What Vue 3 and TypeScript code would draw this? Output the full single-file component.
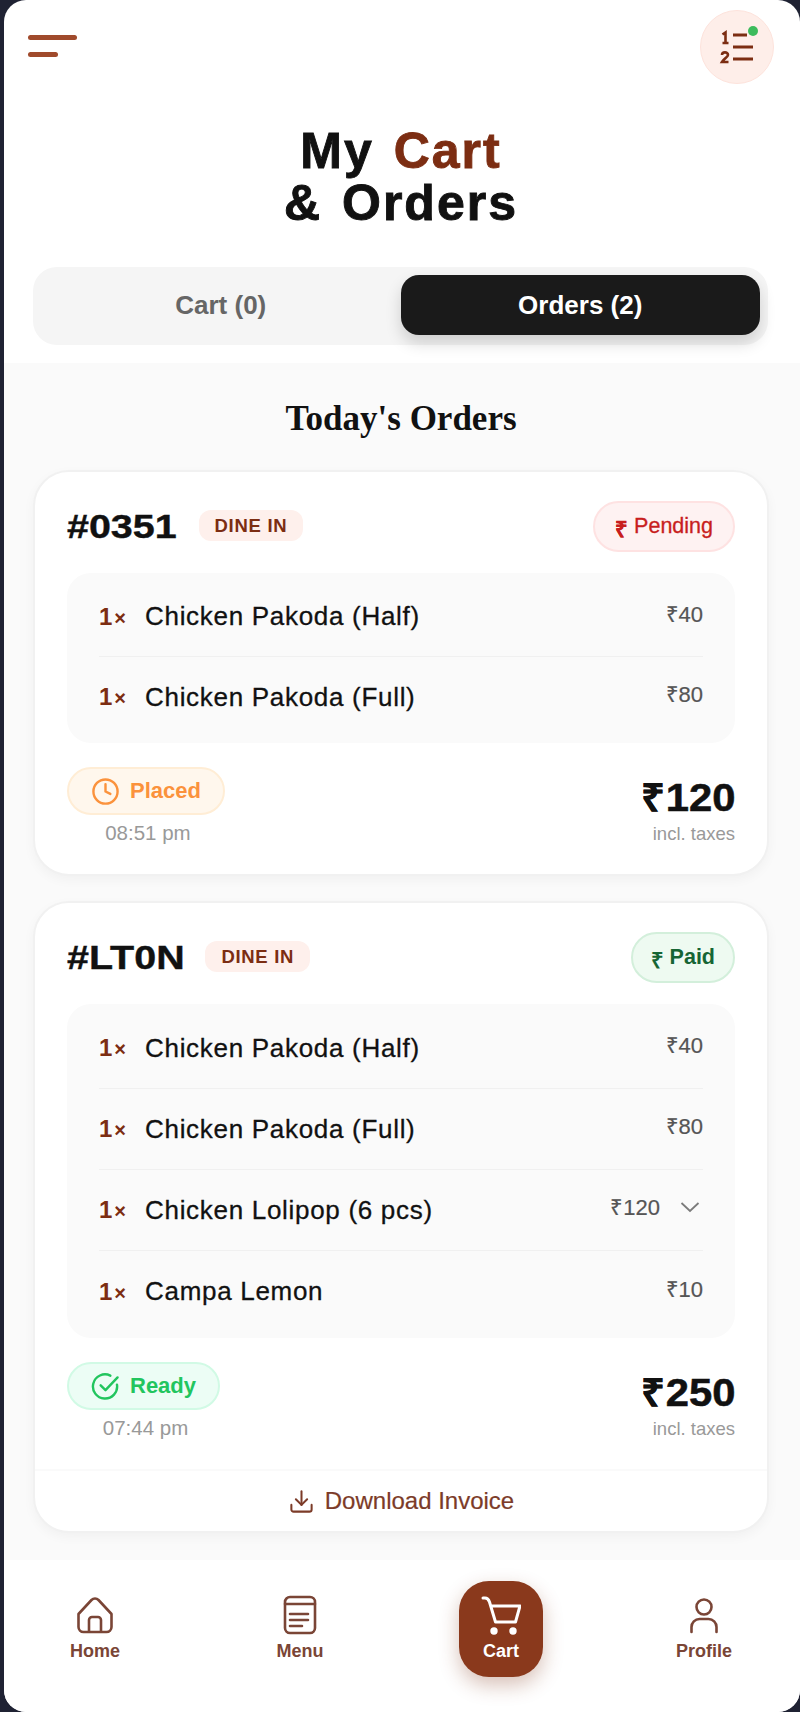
<script setup lang="ts">
interface Item {
  name: string;
  price: number;
  expand?: boolean;
}
interface Order {
  id: string;
  paid: boolean;
  status: string;
  time: string;
  total: number;
  invoice: boolean;
  items: Item[];
}

const orders: Order[] = [
  {
    id: "#0351",
    paid: false,
    status: "Placed",
    time: "08:51 pm",
    total: 120,
    invoice: false,
    items: [
      { name: "Chicken Pakoda (Half)", price: 40 },
      { name: "Chicken Pakoda (Full)", price: 80 },
    ],
  },
  {
    id: "#LT0N",
    paid: true,
    status: "Ready",
    time: "07:44 pm",
    total: 250,
    invoice: true,
    items: [
      { name: "Chicken Pakoda (Half)", price: 40 },
      { name: "Chicken Pakoda (Full)", price: 80 },
      { name: "Chicken Lolipop (6 pcs)", price: 120, expand: true },
      { name: "Campa Lemon", price: 10 },
    ],
  },
];
</script>

<template>
  <div class="frame">
    <div class="phone">
      <header class="top">
        <div class="topbar">
          <button class="menu-btn"><span class="bar long"></span><span class="bar short"></span></button>
          <button class="list-btn">
            <svg width="36" height="36" viewBox="0 0 36 36" fill="none" stroke="#7c2d12" stroke-width="3">
              <path d="M3.5 5.500 6.500 3.500V14M3.500 14h6" stroke-width="2.600" />
              <path d="M3 26c0-3.500 6-3.500 6 0 0 2-4 3.500-6 7h6.500" stroke-width="2.600" />
              <path d="M14 6h14M14 18h20M14 30h20" />
            </svg>
            <span class="dot"></span>
          </button>
        </div>
        <h1 class="title">My <span class="accent">Cart</span><br />&amp; Orders</h1>
        <div class="tabs">
          <div class="tab">Cart (0)</div>
          <div class="tab active">Orders (2)</div>
        </div>
      </header>

      <main class="content">
        <h2 class="section-title">Today's Orders</h2>

        <article v-for="order in orders" :key="order.id" class="card">
          <div class="card-body">
            <div class="card-head">
              <div class="head-left">
                <span class="order-id">{{ order.id }}</span>
                <span class="type">DINE IN</span>
              </div>
              <span class="pay" :class="order.paid ? 'paid' : 'pending'">
                <span class="pay-sign">₹</span> {{ order.paid ? "Paid" : "Pending" }}
              </span>
            </div>

            <div class="items" :class="{ long: order.items.length > 2 }">
              <div v-for="item in order.items" :key="item.name" class="item">
                <div class="item-left">
                  <span class="qty">1<small>×</small></span>
                  <span class="item-name">{{ item.name }}</span>
                </div>
                <div class="item-right">
                  <span class="price">₹{{ item.price }}</span>
                  <svg v-if="item.expand" class="chev" width="20" height="20" viewBox="0 0 20 20" fill="none" stroke="#7b7b7b" stroke-width="1.800">
                    <path d="M1.500 6 10 14l8.500-8" />
                  </svg>
                </div>
              </div>
            </div>

            <div class="card-foot">
              <div class="status-col">
                <span class="status" :class="order.paid ? 'ready' : 'placed'">
                  <svg v-if="!order.paid" width="29" height="29" viewBox="0 0 24 24" fill="none" stroke="currentColor" stroke-width="2" stroke-linecap="round" stroke-linejoin="round">
                    <circle cx="12" cy="12" r="10" />
                    <path d="M12 6v6l4 2" />
                  </svg>
                  <svg v-else width="29" height="29" viewBox="0 0 24 24" fill="none" stroke="currentColor" stroke-width="2" stroke-linecap="round" stroke-linejoin="round">
                    <path d="M21.500 10.500A10 10 0 1 1 16 3" />
                    <path d="m8 11 4 4L22 4.500" />
                  </svg>
                  {{ order.status }}
                </span>
                <span class="time">{{ order.time }}</span>
              </div>
              <div class="total-col">
                <span class="total">₹{{ order.total }}</span>
                <span class="taxes">incl. taxes</span>
              </div>
            </div>
          </div>

          <div v-if="order.invoice" class="invoice">
            <svg width="27" height="27" viewBox="0 0 24 24" fill="none" stroke="currentColor" stroke-width="1.800" stroke-linecap="round" stroke-linejoin="round">
              <path d="M21 15v4a2 2 0 0 1-2 2H5a2 2 0 0 1-2-2v-4" />
              <path d="m7 10 5 5 5-5" />
              <path d="M12 15V3" />
            </svg>
            Download Invoice
          </div>
        </article>
      </main>

      <nav class="nav">
        <div class="nav-item">
          <svg width="40" height="40" viewBox="0 0 40 40" fill="none" stroke="currentColor" stroke-width="2.600" stroke-linejoin="round">
            <path d="M3.500 19 16.500 5a5 5 0 0 1 7 0L36.500 19v13a5 5 0 0 1-5 5h-23a5 5 0 0 1-5-5z" />
            <path d="M14 37V25a3 3 0 0 1 3-3h6a3 3 0 0 1 3 3v12" />
          </svg>
          <span>Home</span>
        </div>
        <div class="nav-item nudge">
          <svg width="36" height="40" viewBox="0 0 36 40" fill="none" stroke="currentColor" stroke-width="2.600" stroke-linecap="round">
            <rect x="3" y="2" width="30" height="36" rx="5" />
            <path d="M3 9h30M8 19h18M8 25h18M8 31h12" />
          </svg>
          <span>Menu</span>
        </div>
        <div class="nav-item nav-cart">
          <svg width="40" height="40" viewBox="0 0 40 40" fill="none" stroke="#fff" stroke-width="3" stroke-linecap="round" stroke-linejoin="round">
            <path d="M2 3h2c2 0 3.500 1 4.500 4l6 20h20l4.500-16H10" />
            <circle cx="13" cy="36" r="2.200" fill="#fff" />
            <circle cx="32" cy="36" r="2.200" fill="#fff" />
          </svg>
          <span>Cart</span>
        </div>
        <div class="nav-item">
          <svg width="40" height="40" viewBox="0 0 40 40" fill="none" stroke="currentColor" stroke-width="2.600" stroke-linecap="round">
            <circle cx="20" cy="12" r="7.500" />
            <path d="M7.500 37v-5a8 8 0 0 1 8-8h9a8 8 0 0 1 8 8v5" />
          </svg>
          <span>Profile</span>
        </div>
      </nav>
    </div>
  </div>
</template>

<style>
html,
body {
  margin: 0;
  background: #1f2233;
}
</style>

<style scoped>
.frame {
  width: 800px;
  height: 1712px;
  background: #1f2233;
  overflow: hidden;
  font-family: "Liberation Sans", Arial, sans-serif;
}
.phone {
  margin-left: 4px;
  width: 796px;
  height: 1712px;
  background: #fff;
  border-radius: 22px;
  display: flex;
  flex-direction: column;
  overflow: hidden;
}
.top {
  padding: 10px 26px 18px 24px;
}
.topbar {
  display: flex;
  justify-content: space-between;
  align-items: flex-start;
}
button {
  border: 0;
  background: none;
  padding: 0;
}
.menu-btn {
  display: flex;
  flex-direction: column;
  gap: 12px;
  margin-top: 25px;
}
.bar {
  display: block;
  height: 5px;
  border-radius: 3px;
  background: #a04a2c;
}
.bar.long {
  width: 49px;
}
.bar.short {
  width: 30px;
}
.list-btn {
  position: relative;
  width: 74px;
  height: 74px;
  border-radius: 50%;
  background: #feeee9;
  border: 1px solid #fde3dc;
  display: flex;
  align-items: center;
  justify-content: center;
  box-sizing: border-box;
}
.dot {
  position: absolute;
  top: 15px;
  right: 15px;
  width: 10px;
  height: 10px;
  border-radius: 50%;
  background: #3dbb5c;
}
.title {
  margin: 41px 0 0;
  text-align: center;
  font-size: 50px;
  line-height: 52px;
  font-weight: 700;
  letter-spacing: 2px;
  word-spacing: 4px;
  -webkit-text-stroke: 0.900px currentColor;
  color: #111;
}
.accent {
  color: #7c2d12;
}
.tabs {
  margin: 38px 6px 0 5px;
  background: #f5f5f5;
  border-radius: 24px;
  padding: 8px 8px 10px;
  display: grid;
  grid-template-columns: 1fr 1fr;
}
.tab {
  height: 60px;
  border-radius: 18px;
  display: flex;
  align-items: center;
  justify-content: center;
  font-size: 26px;
  font-weight: 700;
  color: #666;
}
.tab.active {
  background: #1a1a1a;
  color: #fff;
  box-shadow: 0 8px 16px rgba(0, 0, 0, 0.16);
}
.content {
  flex: 1;
  background: #fafafa;
  padding: 0 31px 0 29px;
  min-height: 0;
}
.section-title {
  margin: 35px 0 30px;
  text-align: center;
  font-family: "Liberation Serif", serif;
  font-size: 35px;
  line-height: 42px;
  font-weight: 700;
  color: #111;
}
.card {
  background: #fff;
  border: 2px solid #f1f1f1;
  border-radius: 36px;
  box-shadow: 0 4px 12px rgba(0, 0, 0, 0.04);
  margin-bottom: 25px;
  overflow: hidden;
}
.card-body {
  padding: 29px 32px 30px;
}
.card-head {
  display: flex;
  justify-content: space-between;
  align-items: center;
}
.head-left {
  display: flex;
  align-items: center;
  gap: 20px;
}
.order-id {
  display: inline-block;
  font-size: 34px;
  font-weight: 700;
  transform: scaleX(1.16);
  transform-origin: left center;
  margin-right: 17px;
  -webkit-text-stroke: 0.400px #111;
  color: #111;
}
.type {
  padding: 0 16px;
  height: 31px;
  line-height: 31px;
  margin-top: -3px;
  border-radius: 12px;
  background: #fef0ec;
  color: #7c2d12;
  font-size: 18.500px;
  font-weight: 700;
  letter-spacing: 0.700px;
}
.pay {
  height: 51px;
  box-sizing: border-box;
  padding: 0 20px;
  border-radius: 26px;
  display: flex;
  align-items: center;
  gap: 6px;
  font-size: 21.500px;
  -webkit-text-stroke: 0.300px currentColor;
}
.pay.pending {
  background: #fef2f2;
  border: 2px solid #fee2e2;
  color: #c81e1e;
}
.pay.paid {
  background: #eefaf1;
  border: 2px solid #d3efdb;
  color: #166534;
  font-weight: 700;
  -webkit-text-stroke: 0;
  padding: 0 18px;
}
.pay-sign {
  font-size: 22px;
  font-weight: 700;
  margin-top: 3px;
}
.items {
  margin-top: 21px;
  background: #fafafa;
  border-radius: 24px;
  padding: 4px 32px 6px;
}
.item {
  height: 80px;
  box-sizing: border-box;
  display: flex;
  justify-content: space-between;
  align-items: center;
  border-bottom: 1px solid #f0f0f0;
}
.items.long .item {
  height: 81px;
}
.item:last-child {
  border-bottom: 0;
}
.item-left {
  display: flex;
  align-items: center;
  gap: 16px;
}
.qty {
  width: 30px;
  font-size: 24px;
  font-weight: 700;
  color: #7c2d12;
  letter-spacing: 2px;
  white-space: nowrap;
}
.qty small {
  font-size: 20px;
}
.item-name {
  font-size: 26px;
  letter-spacing: 0.700px;
  color: #111;
  -webkit-text-stroke: 0.300px #111;
}
.item-right {
  display: flex;
  align-items: center;
  gap: 20px;
}
.price {
  font-size: 22px;
  color: #555;
  -webkit-text-stroke: 0.200px #555;
  margin-top: -8px;
}
.chev {
  margin-top: -6px;
  margin-right: 3px;
}
.card-foot {
  margin-top: 24px;
  display: flex;
  justify-content: space-between;
  align-items: flex-start;
}
.status-col {
  display: flex;
  flex-direction: column;
  align-items: center;
  gap: 6px;
}
.status {
  height: 48px;
  box-sizing: border-box;
  padding: 0 22px;
  border-radius: 24px;
  display: flex;
  align-items: center;
  gap: 10px;
  font-size: 22px;
  font-weight: 700;
}
.status.placed {
  background: #fff7ed;
  border: 2px solid #ffedd5;
  color: #fb923c;
}
.status.ready {
  background: #ecfdf5;
  border: 2px solid #d1fae5;
  color: #22c55e;
}
.time {
  padding-left: 4px;
  font-size: 20.500px;
  line-height: 23px;
  color: #999;
}
.total-col {
  display: flex;
  flex-direction: column;
  align-items: flex-end;
  margin-top: 9px;
}
.total {
  display: inline-block;
  font-size: 38px;
  line-height: 44px;
  font-weight: 700;
  transform: scaleX(1.1);
  transform-origin: right center;
  -webkit-text-stroke: 0.500px #111;
  color: #111;
}
.taxes {
  margin-top: 3px;
  font-size: 18.500px;
  line-height: 21px;
  color: #999;
}
.invoice {
  height: 62px;
  box-sizing: border-box;
  border-top: 2px solid #fafafa;
  display: flex;
  align-items: center;
  justify-content: center;
  gap: 10px;
  font-size: 24px;
  color: #7c3b28;
  -webkit-text-stroke: 0.200px #7c3b28;
}
.nav {
  height: 152px;
  flex-shrink: 0;
  box-sizing: border-box;
  background: #fff;
  padding: 21px 0 0 49px;
  display: flex;
  gap: 119px;
  align-items: flex-start;
  color: #7a4536;
}
.nav-item {
  width: 84px;
  display: flex;
  flex-direction: column;
  align-items: center;
  gap: 6px;
  padding-top: 14px;
  font-size: 18px;
  line-height: 21px;
  font-weight: 700;
  white-space: nowrap;
}
.nav-item.nudge {
  margin: 0 -2px 0 2px;
}
.nav-cart {
  height: 96px;
  box-sizing: border-box;
  border-radius: 30px;
  background: #8a391c;
  color: #fff;
  box-shadow: 0 8px 20px rgba(124, 45, 18, 0.3);
}
</style>
